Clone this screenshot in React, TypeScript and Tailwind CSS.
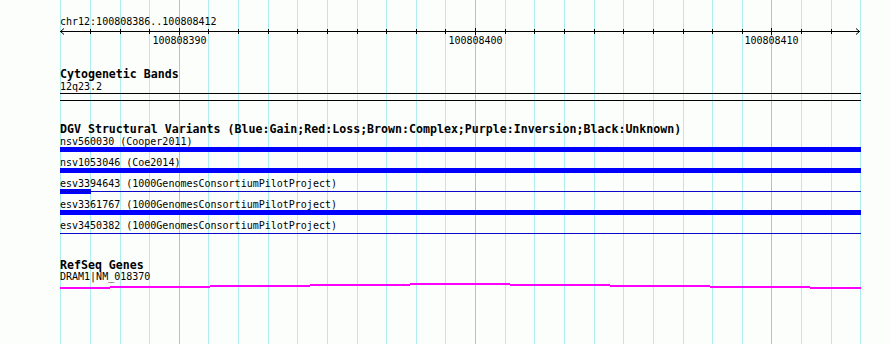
import React from 'react';

// Grid: 27 bp across 800px starting at x=60
const GRID = Array.from({ length: 28 }, (_, k) => Math.round(60.3 + (k * 800) / 27));
const MAJOR = new Set([4, 14, 24]);

const RULER_LABELS = [
  { k: 4, text: '100808390' },
  { k: 14, text: '100808400' },
  { k: 24, text: '100808410' },
];

const VARIANTS = [
  { id: 'nsv560030', study: 'Cooper2011', glyph: 'bar' },
  { id: 'nsv1053046', study: 'Coe2014', glyph: 'bar' },
  { id: 'esv3394643', study: '1000GenomesConsortiumPilotProject', glyph: 'stub' },
  { id: 'esv3361767', study: '1000GenomesConsortiumPilotProject', glyph: 'bar' },
  { id: 'esv3450382', study: '1000GenomesConsortiumPilotProject', glyph: 'line' },
];

// stepped gene line: [x1, x2, top]
const GENE_SEGMENTS: [number, number, number][] = [
  [0, 50, 4],
  [50, 150, 3],
  [150, 250, 2],
  [250, 350, 1],
  [350, 450, 0],
  [450, 550, 1],
  [550, 650, 2],
  [650, 750, 3],
  [750, 801, 4],
];

const GridLines: React.FC = () => (
  <svg className="absolute inset-0" width={890} height={344}>
    {GRID.map((x, k) => (
      <line
        key={k}
        x1={x + 0.5}
        x2={x + 0.5}
        y1={0}
        y2={344}
        stroke={MAJOR.has(k) ? '#8fd0e2' : '#aeeeee'}
        strokeWidth={1}
      />
    ))}
  </svg>
);

const Ruler: React.FC = () => (
  <div className="relative h-[19px] w-[801px]">
    <svg className="absolute left-0 top-0" width={802} height={10}>
      <line x1={0} x2={800} y1={3.5} y2={3.5} stroke="#000" strokeWidth={1} />
      <polyline points="4,0.5 0.5,3.5 4,6.5" fill="none" stroke="#000" strokeWidth={1} />
      <polyline points="796,0.5 799.5,3.5 796,6.5" fill="none" stroke="#000" strokeWidth={1} />
      {GRID.slice(1, 27).map((x, i) => {
        const k = i + 1;
        return (
          <line
            key={k}
            x1={x - 60 + 0.5}
            x2={x - 60 + 0.5}
            y1={MAJOR.has(k) ? 0 : 1}
            y2={MAJOR.has(k) ? 7 : 6}
            stroke="#000"
            strokeWidth={1}
          />
        );
      })}
    </svg>
    {RULER_LABELS.map((l) => (
      <div
        key={l.k}
        className="absolute top-[6px] h-[13px] w-[60px] -translate-x-1/2 text-center text-[10px] leading-[13px]"
        style={{ left: GRID[l.k] - 60 + 0.5 }}
      >
        {l.text}
      </div>
    ))}
  </div>
);

const TrackTitle: React.FC<{ children: React.ReactNode }> = ({ children }) => (
  <div className="h-[12px] whitespace-pre text-[11.6px] font-bold leading-[12px]">{children}</div>
);

const VariantRow: React.FC<{ id: string; study: string; glyph: string }> = ({ id, study, glyph }) => (
  <div className="flex flex-col">
    <div className="h-[12px] whitespace-pre text-[10px] leading-[13px]">
      {id} ({study})
    </div>
    <div className="relative h-[5px] w-[801px]">
      {glyph === 'bar' && <div className="h-full w-full bg-[#0000ff]" />}
      {glyph === 'stub' && <div className="h-full w-[31px] bg-[#0000ff]" />}
      {glyph !== 'bar' && <div className="absolute left-0 right-0 top-[2px] h-px bg-[#0a0ac8]" />}
    </div>
  </div>
);

export default function App() {
  return (
    <div className="relative h-[344px] w-[890px] overflow-hidden bg-[#fcfefc] font-['DejaVu_Sans_Mono',monospace] text-black">
      <GridLines />

      <div className="relative flex flex-col pl-[60px] pt-[15px]">
        {/* Ruler */}
        <div className="h-[13px] text-[10px] leading-[13px]">chr12:100808386..100808412</div>
        <Ruler />

        {/* Cytogenetic Bands */}
        <div className="mt-[21px]">
          <TrackTitle>Cytogenetic Bands</TrackTitle>
          <div className="h-[13px] text-[10px] leading-[13px]">12q23.2</div>
          <div className="h-[8px] w-[801px] border-y border-black" />
        </div>

        {/* DGV */}
        <div className="mt-[22px]">
          <TrackTitle>DGV Structural Variants (Blue:Gain;Red:Loss;Brown:Complex;Purple:Inversion;Black:Unknown)</TrackTitle>
          <div className="flex flex-col gap-[4px]">
            {VARIANTS.map((v) => (
              <VariantRow key={v.id} {...v} />
            ))}
          </div>
        </div>

        {/* RefSeq */}
        <div className="mt-[23px]">
          <TrackTitle>RefSeq Genes</TrackTitle>
          <div className="h-[12px] whitespace-pre text-[10px] leading-[11px]">DRAM1|NM_018370</div>
          <svg width={801} height={8}>
            {GENE_SEGMENTS.map(([x1, x2, top], i) => (
              <rect key={i} x={x1} y={top} width={x2 - x1} height={2} fill="#ff00ff" />
            ))}
          </svg>
        </div>
      </div>
    </div>
  );
}
